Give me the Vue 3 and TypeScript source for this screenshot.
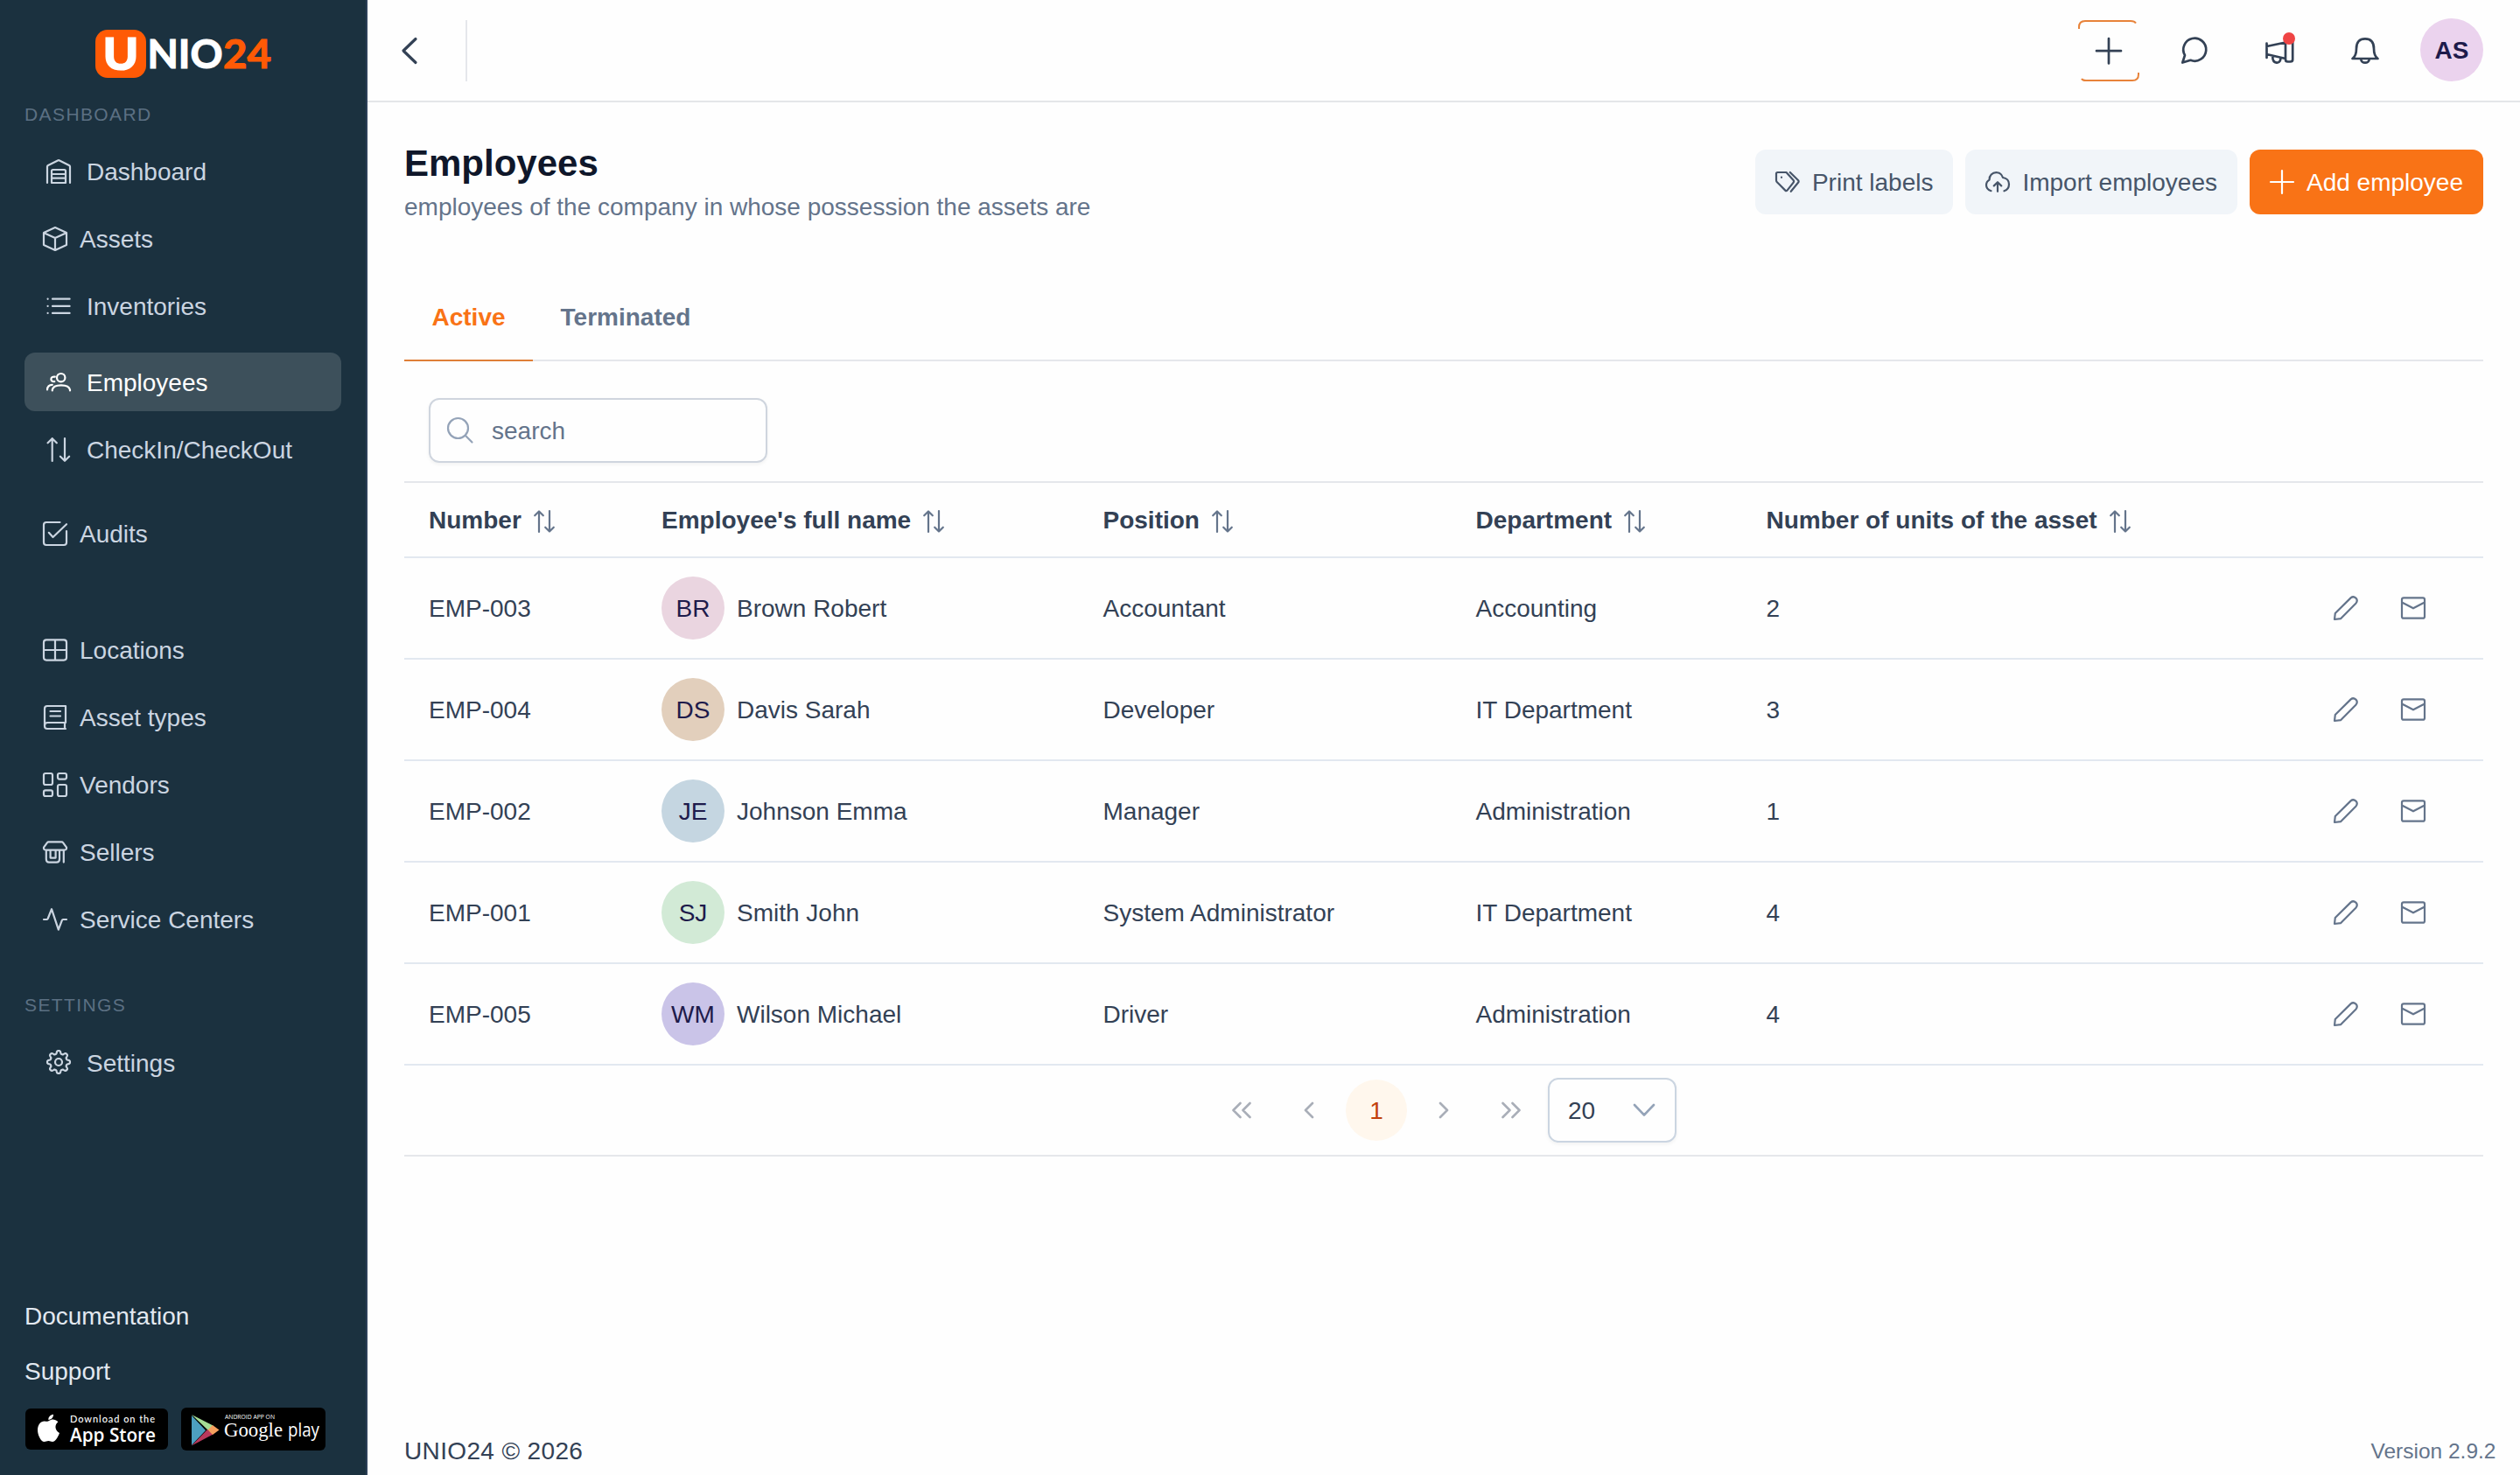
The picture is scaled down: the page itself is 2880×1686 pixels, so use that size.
<script setup lang="ts">
interface NavItem {
  label: string
  icon: string
  nested?: boolean
  active?: boolean
  gap?: number
}

interface Employee {
  code: string
  initials: string
  color: string
  name: string
  position: string
  department: string
  units: number
}

/* Eight-toothed outline sampled in polar coordinates. */
function gearPath(cx: number, cy: number): string {
  const points: string[] = []
  for (let i = 0; i < 160; i++) {
    const a = (i / 160) * Math.PI * 2
    const r = 11.3 + 1.75 * Math.tanh(1.9 * Math.cos(8 * a))
    points.push(`${(cx + r * Math.cos(a)).toFixed(2)} ${(cy + r * Math.sin(a)).toFixed(2)}`)
  }
  return `M${points.join('L')}Z`
}

const icons: Record<string, string> = {
  warehouse: 'M1 27V8.5Q1 7.6 2 7L13 1.4Q14 .9 15 1.4L26 7Q27 7.6 27 8.5V27M6 27V13.5Q6 12 7.5 12H20.5Q22 12 22 13.5V27ZM6 17H22M6 21.7H22',
  box: 'M14 1L27 7V21L14 27L1 21V7ZM1.3 7.2L14 13L26.7 7.2M14 13V27',
  list: 'M1.6 5.6V5.8M1.6 13.8V14M1.6 21.8V22M7 5.7H26.6M7 13.9H26.6M7 21.9H26.6',
  users: 'M21.4 8.7A4.7 4.7 0 1 1 12 8.7A4.7 4.7 0 1 1 21.4 8.7M6.8 23.5V22.5C7.4 18.6 10.8 17.3 16.9 17.3S26.2 18.6 27 22.5V23.5M9.8 7.6C7 7.3 5.4 8.6 5.4 10.4C5.4 12.3 7 13.4 9.3 13.1M1 22.5C1.2 18.6 3 17 6.8 16.9',
  swap: 'M6.7 27V1.2M1.6 6.3L6.7 1.2L11.8 6.3M21 1V26.8M15.9 21.7L21 26.8L26.1 21.7',
  check: 'M19.5 1H4Q1 1 1 4V24Q1 27 4 27H24Q27 27 27 24V11M6.8 12.8L11.5 18L27 3.2',
  grid: 'M4 2.4H24Q27 2.4 27 5.4V22.6Q27 25.6 24 25.6H4Q1 25.6 1 22.6V5.4Q1 2.4 4 2.4ZM14 2.4V25.6M1 14H27',
  book: 'M26 1H5Q2 1 2 4V24Q2 27 5 27H26M26 1V20M2 23.5Q2 20 5.5 20H26M25 20V27M8.5 7H20M8.5 12.5H20',
  objects: 'M3 1H9Q11 1 11 3V12Q11 14 9 14H3Q1 14 1 12V3Q1 1 3 1ZM19 1H25Q27 1 27 3V5.6Q27 7.6 25 7.6H19Q17 7.6 17 5.6V3Q17 1 19 1ZM3 20.4H9Q11 20.4 11 22.4V25Q11 27 9 27H3Q1 27 1 25V22.4Q1 20.4 3 20.4ZM19 14H25Q27 14 27 16V25Q27 27 25 27H19Q17 27 17 25V16Q17 14 19 14Z',
  shop: 'M6.5 2.3H21.5Q22.5 2.3 23 3.1L27 8.6Q27.4 11.6 24.5 11.6H3.5Q.6 11.6 1 8.6L5 3.1Q5.5 2.3 6.5 2.3ZM3.8 11.6V22Q3.8 25.6 7 25.6H15.6Q19 25.6 19 22V11.6M23.8 11.6V25.6M8.6 11.6V20.6H14.6V11.6',
  pulse: 'M1 14H4.6Q5.4 14 5.7 13L10 2.2L17.8 25.6L21.9 14.8Q22.2 14 23 14H27',
  cog: gearPath(14, 14) + 'M18 14A4 4 0 1 1 10 14A4 4 0 1 1 18 14',
}

const mainNav: NavItem[] = [
  { label: 'Dashboard', icon: 'warehouse' },
  { label: 'Assets', icon: 'box', nested: true },
  { label: 'Inventories', icon: 'list' },
  { label: 'Employees', icon: 'users', active: true, gap: 10 },
  { label: 'CheckIn/CheckOut', icon: 'swap' },
  { label: 'Audits', icon: 'check', nested: true, gap: 19 },
  { label: 'Locations', icon: 'grid', nested: true, gap: 56 },
  { label: 'Asset types', icon: 'book', nested: true },
  { label: 'Vendors', icon: 'objects', nested: true },
  { label: 'Sellers', icon: 'shop', nested: true },
  { label: 'Service Centers', icon: 'pulse', nested: true },
]

const settingsNav: NavItem[] = [{ label: 'Settings', icon: 'cog' }]

const navGroups = [
  { title: 'DASHBOARD', items: mainNav },
  { title: 'SETTINGS', items: settingsNav },
]

const columns = ['Number', "Employee's full name", 'Position', 'Department', 'Number of units of the asset']

const employees: Employee[] = [
  { code: 'EMP-003', initials: 'BR', color: '#ead5e0', name: 'Brown Robert', position: 'Accountant', department: 'Accounting', units: 2 },
  { code: 'EMP-004', initials: 'DS', color: '#e2cfbc', name: 'Davis Sarah', position: 'Developer', department: 'IT Department', units: 3 },
  { code: 'EMP-002', initials: 'JE', color: '#c5d6e1', name: 'Johnson Emma', position: 'Manager', department: 'Administration', units: 1 },
  { code: 'EMP-001', initials: 'SJ', color: '#d2ead6', name: 'Smith John', position: 'System Administrator', department: 'IT Department', units: 4 },
  { code: 'EMP-005', initials: 'WM', color: '#cac4e8', name: 'Wilson Michael', position: 'Driver', department: 'Administration', units: 4 },
]
</script>

<template>
  <div class="app">
    <aside class="sidebar">
      <svg class="logo" width="202" height="56" viewBox="0 0 202 56">
        <rect width="58" height="55" rx="14" fill="#ff5a05" />
        <text x="8.5" y="45.5" class="logo-u" textLength="41" lengthAdjust="spacingAndGlyphs">U</text>
        <text x="59.500" y="44" class="logo-t nio" textLength="86" lengthAdjust="spacingAndGlyphs">NIO</text>
        <text x="146" y="44" class="logo-t num" textLength="55" lengthAdjust="spacingAndGlyphs">24</text>
      </svg>

      <nav v-for="group in navGroups" :key="group.title" class="group">
        <div class="group-title">{{ group.title }}</div>
        <ul>
          <li v-for="item in group.items" :key="item.label" :style="{ marginTop: (item.gap ?? 0) + 'px' }">
            <a class="nav-link" :class="{ nested: item.nested, active: item.active }">
              <svg class="ico" width="28" height="28" viewBox="0 0 28 28"><path :d="icons[item.icon]" /></svg>
              <span>{{ item.label }}</span>
            </a>
          </li>
        </ul>
      </nav>

      <div class="side-foot">
        <a>Documentation</a>
        <a>Support</a>
        <div class="badges">
          <svg width="163" height="47" viewBox="0 0 163 47">
            <rect width="163" height="47" rx="6" />
            <path fill="#fff" d="M27 14C30 11.6 34 11.8 37.4 15.2C33 18.6 33.6 25 39 28C37 33.4 34 38 31 38C29 38 28.4 37 26.400 37C24.400 37 23.600 38 21.600 38C17.600 38 14 30 14 24.500C14 18.500 17.500 14.400 21.800 14.400C24 14.400 25.400 15.500 27 14ZM26.400 13C26 10 28.500 7.200 32 6.800C32.200 10 29.800 12.800 26.400 13Z" />
            <text x="51" y="15.500" class="store-small" textLength="97" lengthAdjust="spacing">Download on the</text>
            <text x="51" y="37.500" class="store-big" textLength="98" lengthAdjust="spacingAndGlyphs">App Store</text>
          </svg>
          <svg width="165" height="49" viewBox="0 0 165 49">
            <rect width="165" height="49" rx="6" />
            <path fill="#4d9fc0" d="M12 9L28 26L12 43Z" />
            <path fill="#a5dc94" d="M12 8L36.500 20.500L31 26Z" />
            <path fill="#b8395c" d="M12 43.500L36.500 30.500L30 25Z" />
            <path fill="#f6a05e" d="M36 20L43.500 25.500L36 31L30.500 25.500Z" />
            <text x="50" y="12.500" class="play-small" textLength="57" lengthAdjust="spacingAndGlyphs">ANDROID APP ON</text>
            <text x="49" y="32.500" class="play-big" textLength="67" lengthAdjust="spacingAndGlyphs">Google</text>
            <text x="122" y="32.500" class="play-word" textLength="36" lengthAdjust="spacingAndGlyphs">play</text>
          </svg>
        </div>
      </div>
    </aside>

    <main class="main">
      <header class="topbar">
        <div class="top-left">
          <svg class="ico back" width="18" height="30" viewBox="0 0 18 30"><path d="M16 1.500L2 15L16 28.500" /></svg>
          <span class="divider"></span>
        </div>
        <div class="top-right">
          <svg class="ico add-top" width="70" height="70" viewBox="0 0 70 70">
            <path class="frame" d="M1 10V8Q1 1 8 1H60Q64.500 1 66 3.500M4 67Q5 69 9 69H62Q69 69 69 62V60" />
            <path d="M35 21V49.500M21 35.200H49" />
          </svg>
          <svg class="ico chat" width="30" height="30" viewBox="0 0 30 30"><path d="M1.300 28.500L4 20.200A13 13 0 1 1 10.500 25.800Z" /></svg>
          <svg class="ico horn" width="34" height="38" viewBox="0 0 34 38">
            <path d="M1.500 13.500V30M1.500 17L23 12.500M1.500 26L23 31M23 12V32Q23 34.500 25.500 34.500H28.500Q31.200 34.500 31.200 32V10Q31.200 8 28.500 8H25.500Q23 8 23 10.500ZM8.300 29.500C8.300 37 17 37.500 17.300 31.500" />
            <circle cx="27" cy="8" r="7" class="dot" />
          </svg>
          <svg class="ico bell" width="32" height="30" viewBox="0 0 32 30"><path d="M1.500 24Q6 21 6 12.500C6 5 9.500 1.300 16 1.300S26 5 26 12.500Q26 21 30.500 24ZM11.200 24.500C11.500 30 20.500 30 20.800 24.500" /></svg>
          <span class="avatar me">AS</span>
        </div>
      </header>

      <section class="head">
        <div>
          <h1>Employees</h1>
          <p>employees of the company in whose possession the assets are</p>
        </div>
        <div class="actions">
          <button class="btn">
            <svg class="ico" width="28" height="28" viewBox="0 0 28 28"><path d="M1 4.500Q1 3 2.500 3H12.500L20.600 12Q21.600 13.300 20.600 14.600L13.500 23.600Q12.500 24.800 11.300 23.600L1.700 14Q1 13.300 1 12ZM16.800 3L26 12Q27.200 13.400 26 14.800L17.800 24.800M7 8.500V8.800" /></svg>
            <span>Print labels</span>
          </button>
          <button class="btn">
            <svg class="ico" width="28" height="28" viewBox="0 0 28 28"><path d="M6.500 24.200C3 23 1 20.600 1 17.500C1 14.600 2.600 12.700 4.600 11.600C4.300 6.800 8 3.200 12.400 3.200C16.200 3.200 19 5.500 20 9C24.500 9.600 27 12.800 27 16.600C27 20.400 25 23.200 21.500 24.300M14 24.800V14.500M9.800 18.400L14 14.200L18.200 18.400" /></svg>
            <span>Import employees</span>
          </button>
          <button class="btn primary">
            <svg class="ico" width="28" height="28" viewBox="0 0 28 28"><path d="M14 1V27M1 14H27" /></svg>
            <span>Add employee</span>
          </button>
        </div>
      </section>

      <div class="tabs">
        <a class="tab on">Active</a>
        <a class="tab">Terminated</a>
      </div>

      <div class="tools">
        <label class="search">
          <svg class="ico" width="30" height="30" viewBox="0 0 30 30"><circle cx="12.500" cy="12.500" r="11.500" /><path d="M20.800 20.800L28.500 28.500" /></svg>
          <span>search</span>
        </label>
      </div>

      <div class="table">
        <div class="row thead">
          <div v-for="c in columns" :key="c" class="cell">
            <span>{{ c }}</span>
            <svg class="ico sort" width="26" height="28" viewBox="0 0 26 28"><path d="M7 26V2.500M2.200 7.300L7 2.500L11.800 7.300M19 2V25.500M14.200 20.700L19 25.500L23.800 20.700" /></svg>
          </div>
          <div class="cell"></div>
        </div>
        <div v-for="e in employees" :key="e.code" class="row">
          <div class="cell"><span>{{ e.code }}</span></div>
          <div class="cell"><b class="avatar" :style="{ background: e.color }">{{ e.initials }}</b><span>{{ e.name }}</span></div>
          <div class="cell"><span>{{ e.position }}</span></div>
          <div class="cell"><span>{{ e.department }}</span></div>
          <div class="cell"><span>{{ e.units }}</span></div>
          <div class="cell ops">
            <svg class="ico" width="28" height="28" viewBox="0 0 28 28"><path d="M1 27L1.800 20L19.600 2.400Q22.500 0 25.400 2.600Q28 5.500 25.600 8.400L8 26.200Z" /></svg>
            <svg class="ico" width="28" height="28" viewBox="0 0 28 28"><path d="M3 2.300H25Q27 2.300 27 4.300V23.700Q27 25.700 25 25.700H3Q1 25.700 1 23.700V4.300Q1 2.300 3 2.300ZM1 7.500L14 14.300L27 7.500" /></svg>
          </div>
        </div>
      </div>

      <div class="pager">
        <span class="pg"><svg class="ico" width="24" height="20" viewBox="0 0 24 20"><path d="M10.500 2L2.500 10L10.500 18M21.500 2L13.500 10L21.500 18" /></svg></span>
        <span class="pg"><svg class="ico" width="12" height="20" viewBox="0 0 12 20"><path d="M10 2L2 10L10 18" /></svg></span>
        <span class="pg cur">1</span>
        <span class="pg"><svg class="ico" width="12" height="20" viewBox="0 0 12 20"><path d="M2 2L10 10L2 18" /></svg></span>
        <span class="pg"><svg class="ico" width="24" height="20" viewBox="0 0 24 20"><path d="M2.500 2L10.500 10L2.500 18M13.500 2L21.500 10L13.500 18" /></svg></span>
        <div class="select">
          <span>20</span>
          <svg class="ico" width="26" height="16" viewBox="0 0 26 16"><path d="M2 2L13 13.500L24 2" /></svg>
        </div>
      </div>

      <footer class="footer">
        <span class="copy">UNIO24 © 2026</span>
        <span class="version">Version 2.9.2</span>
      </footer>
    </main>
  </div>
</template>

<style>
body {
  margin: 0;
  background: #fff;
}
</style>

<style scoped>
.app {
  display: flex;
  width: 2880px;
  height: 1686px;
  overflow: hidden;
  font-family: "Liberation Sans", Arial, Helvetica, sans-serif;
  font-size: 28px;
  line-height: 32px;
  color: #334155;
  background: #fefefe;
}
.app * {
  box-sizing: border-box;
}
.ico {
  flex: none;
  overflow: visible;
  fill: none;
  stroke: currentColor;
  stroke-width: 2.2;
  stroke-linecap: round;
  stroke-linejoin: round;
}

.sidebar {
  flex: none;
  display: flex;
  flex-direction: column;
  width: 420px;
  padding: 34px 28px 28px;
  background: #1b313f;
  border-right: 2px solid #2c4058;
  color: #cbd5e1;
}
.logo {
  flex: none;
  margin-left: 81px;
  overflow: visible;
}
.logo-u {
  font: 900 51px Lato, sans-serif;
  fill: #fff;
  stroke: #fff;
  stroke-width: 1.2;
}
.logo-t {
  font: 700 45px Lato, sans-serif;
  stroke-width: 1.2;
}
.nio {
  fill: #fff;
  stroke: #fff;
}
.num {
  fill: #ff5a05;
  stroke: #ff5a05;
}
.group-title {
  height: 24px;
  margin: 29px 0 14px;
  font-size: 21px;
  line-height: 24px;
  letter-spacing: 1.4px;
  color: #5c7083;
}
.group + .group .group-title {
  margin: 47.5px 0 15px;
}
ul {
  margin: 0;
  padding: 0;
  list-style: none;
}
.nav-link {
  display: flex;
  align-items: center;
  gap: 18px;
  height: 67px;
  margin: 5px 0;
  padding-left: 25px;
  border-radius: 12px;
}
.nav-link span {
  padding-top: 3px;
}
li {
  display: flow-root;
  width: 362px;
}
.nav-link.nested {
  padding-left: 21px;
  gap: 14px;
}
.nav-link.active {
  background: #3d505b;
  color: #fff;
}
.side-foot {
  display: flex;
  flex-direction: column;
  margin-top: auto;
  color: #e2e8f0;
}
.side-foot a {
  height: 63px;
}
.badges {
  display: flex;
  align-items: center;
  gap: 15px;
  margin: -6px 0 0 1px;
}
.badges svg {
  overflow: visible;
}
.store-small {
  font: 500 11px Lato, sans-serif;
  fill: #fff;
}
.store-big {
  font: 600 21.500px "Open Sans", sans-serif;
  fill: #fff;
}
.play-small {
  font: 500 7.500px "Open Sans", sans-serif;
  fill: #fff;
}
.play-big {
  font: 24px "Liberation Serif", serif;
  fill: #fff;
}
.play-word {
  font: 22px "Open Sans", sans-serif;
  fill: #fff;
}

.main {
  flex: 1;
  display: flex;
  flex-direction: column;
  min-width: 0;
}
.topbar {
  display: flex;
  justify-content: space-between;
  height: 117px;
  padding: 0 42px 2px 39px;
  border-bottom: 2px solid #e4e6e9;
  color: #334155;
}
.top-left,
.top-right {
  display: flex;
  align-items: center;
}
.topbar .ico {
  stroke-width: 2.700;
}
.topbar .back {
  margin-top: 3px;
  stroke-width: 3.200;
}
.divider {
  width: 2px;
  height: 70px;
  margin: 2px 0 0 55px;
  background: #e5e7eb;
}
.topbar .add-top {
  margin-top: 2px;
}
.add-top .frame {
  stroke: #e8833a;
  stroke-width: 2;
  stroke-linecap: butt;
}
.chat {
  margin: 2px 0 0 48px;
}
.horn {
  margin: -4px 0 0 66px;
}
.dot {
  fill: #ef4444;
  stroke: none;
}
.bell {
  margin: 3px 47px 0 64.5px;
}
.avatar {
  flex: none;
  width: 72px;
  height: 72px;
  border-radius: 50%;
  font-weight: 400;
  line-height: 74px;
  text-align: center;
  color: #1e1b4b;
}
.me {
  font-weight: 700;
  background: #ebd3ee;
}

.head {
  display: flex;
  justify-content: space-between;
  height: 187px;
  padding: 54px 42px 0;
}
h1 {
  margin: 0;
  font-size: 42px;
  line-height: 32px;
  color: #0f172a;
}
p {
  margin: 18px 0 0;
  color: #64748b;
}
.actions {
  display: flex;
  gap: 14px;
}
.btn {
  display: flex;
  align-items: center;
  gap: 14px;
  height: 74px;
  padding: 0 23px;
  border: 0;
  border-radius: 12px;
  background: #f1f5f9;
  color: #475569;
  font: inherit;
  white-space: nowrap;
}
.btn span,
.search span,
.select span,
.pg.cur {
  padding-top: 2px;
}
.btn.primary {
  background: #f97316;
  color: #fff;
}
.tabs {
  display: flex;
  height: 109px;
  margin: 0 42px;
  border-bottom: 2px solid #e5e7eb;
  font-weight: 700;
  color: #64748b;
}
.tab {
  height: 109px;
  padding: 43px 31.500px 0;
}
.tab.on {
  color: #f97316;
  border-bottom: 2px solid #df7f38;
}
.tools {
  height: 137px;
  padding: 42px 70px 0;
}
.search {
  display: flex;
  align-items: center;
  gap: 21.5px;
  width: 387px;
  height: 74px;
  padding-left: 18.5px;
  border: 2px solid #cfd5de;
  border-radius: 12px;
  color: #64748b;
  box-shadow: 0 2px 4px rgba(18, 18, 23, 0.05);
}
.search .ico {
  color: #94a3b8;
}

.table {
  margin: 0 42px;
  border-top: 2px solid #e5e7eb;
}
.row {
  display: grid;
  grid-template-columns: 266px 504.500px 426px 332px 1fr 260px;
  height: 116px;
  border-bottom: 2px solid #e2e8f0;
}
.row.thead {
  height: 86px;
  font-weight: 700;
}
.cell {
  display: flex;
  align-items: center;
  gap: 14px;
  padding-left: 28px;
  white-space: nowrap;
}
.cell span {
  padding-top: 2px;
}
.sort {
  color: #64748b;
  margin: 3px 0 0 -1px;
}
.ops {
  gap: 49px;
  padding-left: 89px;
  color: #64748b;
}

.pager {
  display: flex;
  align-items: center;
  justify-content: center;
  gap: 7px;
  height: 104px;
  margin: 0 42px;
  border-bottom: 2px solid #e5e7eb;
}
.pg {
  display: flex;
  align-items: center;
  justify-content: center;
  width: 70px;
  height: 70px;
  border-radius: 50%;
  color: #a9aeb8;
}
.pg .ico,
.select .ico {
  stroke-width: 2.600;
}
.pg.cur {
  background: #fff7ed;
  color: #c2410c;
}
.select {
  display: flex;
  align-items: center;
  justify-content: space-between;
  width: 147px;
  height: 74px;
  padding: 0 22px 0 21px;
  border: 2px solid #cbd5e1;
  border-radius: 12px;
  box-shadow: 0 2px 4px rgba(18, 18, 23, 0.05);
}
.select .ico {
  color: #94a3b8;
}
.footer {
  display: flex;
  justify-content: space-between;
  align-items: center;
  margin-top: auto;
  padding: 0 27.5px 11px 42px;
}
.copy {
  letter-spacing: 0.36px;
}
.version {
  font-size: 24.500px;
  color: #64748b;
}
</style>
